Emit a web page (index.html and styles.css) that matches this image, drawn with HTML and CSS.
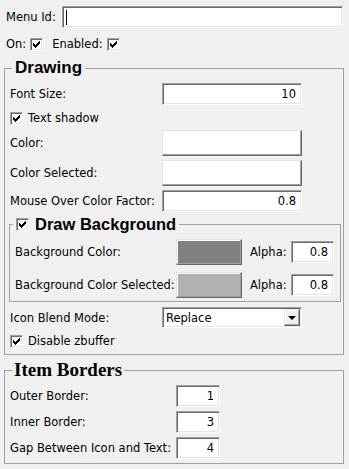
FILE: index.html
```html
<!DOCTYPE html>
<html>
<head>
<meta charset="utf-8">
<link rel="stylesheet" href="styles.css">
</head>
<body>
<div class="panel">
  <div class="row top-row">
    <span class="lbl-menu">Menu Id:</span>
    <div class="field menu-field"><span class="caret"></span></div>
  </div>
  <div class="row top-row on-row">
    <span>On:</span>
    <span class="cb on-cb"><svg width="7" height="7" viewBox="0 0 7 7"><path d="M0 2h1v3h-1zM1 3h1v3h-1zM2 4h1v3h-1zM3 3h1v3h-1zM4 2h1v3h-1zM5 1h1v3h-1zM6 0h1v3h-1z" fill="#000"/></svg></span>
    <span class="en-lbl">Enabled:</span>
    <span class="cb"><svg width="7" height="7" viewBox="0 0 7 7"><path d="M0 2h1v3h-1zM1 3h1v3h-1zM2 4h1v3h-1zM3 3h1v3h-1zM4 2h1v3h-1zM5 1h1v3h-1zM6 0h1v3h-1z" fill="#000"/></svg></span>
  </div>

  <fieldset class="group drawing">
    <legend class="title">Drawing</legend>
    <div class="row r22">
      <span class="lbl-d">Font Size:</span>
      <div class="field num f140">10</div>
    </div>
    <div class="row chk-row">
      <span class="cb"><svg width="7" height="7" viewBox="0 0 7 7"><path d="M0 2h1v3h-1zM1 3h1v3h-1zM2 4h1v3h-1zM3 3h1v3h-1zM4 2h1v3h-1zM5 1h1v3h-1zM6 0h1v3h-1z" fill="#000"/></svg></span>
      <span class="cb-text">Text shadow</span>
    </div>
    <div class="row r26 mt2">
      <span class="lbl-d">Color:</span>
      <div class="cbtn f140"></div>
    </div>
    <div class="row r26 mt4">
      <span class="lbl-d">Color Selected:</span>
      <div class="cbtn f140"></div>
    </div>
    <div class="row r22 mt4">
      <span class="lbl-d">Mouse Over Color Factor:</span>
      <div class="field num f140">0.8</div>
    </div>

    <fieldset class="group drawbg">
      <legend class="bglegend">
        <span class="cb"><svg width="7" height="7" viewBox="0 0 7 7"><path d="M0 2h1v3h-1zM1 3h1v3h-1zM2 4h1v3h-1zM3 3h1v3h-1zM4 2h1v3h-1zM5 1h1v3h-1zM6 0h1v3h-1z" fill="#000"/></svg></span>
        <span>Draw Background</span>
      </legend>
      <div class="row r26">
        <span class="lbl-b">Background Color:</span>
        <div class="sbtn dark"></div>
        <span class="alpha-lbl">Alpha:</span>
        <div class="field num alpha">0.8</div>
      </div>
      <div class="row r26 mt7">
        <span class="lbl-b">Background Color Selected:</span>
        <div class="sbtn light"></div>
        <span class="alpha-lbl">Alpha:</span>
        <div class="field num alpha">0.8</div>
      </div>
    </fieldset>

    <div class="row select-row">
      <span class="lbl-d">Icon Blend Mode:</span>
      <div class="field select f140">
        <span class="sel-text">Replace</span>
        <span class="drop"><span class="arrow"></span></span>
      </div>
    </div>
    <div class="row chk-row mt2">
      <span class="cb"><svg width="7" height="7" viewBox="0 0 7 7"><path d="M0 2h1v3h-1zM1 3h1v3h-1zM2 4h1v3h-1zM3 3h1v3h-1zM4 2h1v3h-1zM5 1h1v3h-1zM6 0h1v3h-1z" fill="#000"/></svg></span>
      <span class="cb-text">Disable zbuffer</span>
    </div>
  </fieldset>

  <fieldset class="group items">
    <legend class="serif-title">Item Borders</legend>
    <div class="row r22">
      <span class="lbl-i">Outer Border:</span>
      <div class="field num small">1</div>
    </div>
    <div class="row r22 mt4">
      <span class="lbl-i">Inner Border:</span>
      <div class="field num small">3</div>
    </div>
    <div class="row r22 mt4">
      <span class="lbl-i">Gap Between Icon and Text:</span>
      <div class="field num small">4</div>
    </div>
  </fieldset>
</div>
</body>
</html>
```
FILE: styles.css
```css
* { box-sizing: border-box; }

html, body {
  margin: 0;
  background: #f0f0f0;
}

body {
  width: 349px;
  height: 469px;
  overflow: hidden;
  font-family: "DejaVu Sans", sans-serif;
  font-size: 11.5px;
  color: #000;
}

.panel {
  padding: 6px 0 0 4px;
}

.row {
  display: flex;
  align-items: center;
  white-space: nowrap;
}

.top-row {
  height: 22px;
  padding-left: 2px;
}

.lbl-menu { width: 56px; }

.field {
  height: 22px;
  background: #fff;
  border: 1px solid;
  border-color: #a0a0a0 #fff #fff #a0a0a0;
  box-shadow: inset 1px 1px 0 #696969, inset -1px -1px 0 #e3e3e3;
  display: flex;
  align-items: center;
  padding: 0 5px;
}

.num { justify-content: flex-end; }

.menu-field {
  width: 281px;
  padding-left: 3px;
}

.caret {
  width: 1px;
  height: 15px;
  background: #000;
}

.on-row { margin-top: 5px; }
.on-cb { margin-left: 4px; }
.en-lbl { margin-left: 9px; margin-right: 4px; }

.cb {
  flex: none;
  width: 13px;
  height: 13px;
  background: #fff;
  border: 1px solid;
  border-color: #a0a0a0 #fff #fff #a0a0a0;
  box-shadow: inset 1px 1px 0 #696969, inset -1px -1px 0 #e3e3e3;
  display: flex;
  align-items: center;
  justify-content: center;
}

.cb svg { display: block; }

.group {
  margin: 0;
  min-width: 0;
  border: 1px solid #a0a0a0;
}

.drawing {
  width: 340px;
  margin-top: 3px;
  padding: 5px 2px 3px 5px;
}

.title {
  font-family: "Liberation Sans", sans-serif;
  font-weight: bold;
  font-size: 17px;
  line-height: 20px;
  padding: 0 3px;
  margin-left: 2px;
}

.r22 { height: 22px; }
.r26 { height: 26px; }
.mt2 { margin-top: 2px; }
.mt4 { margin-top: 4px; }
.mt7 { margin-top: 7px; }

.lbl-d { width: 152px; }
.f140 { width: 140px; }

.chk-row {
  height: 20px;
  margin-top: 3px;
}

.cb-text { margin-left: 5px; }

.cbtn {
  height: 26px;
  background: #fff;
  border: 1px solid;
  border-color: #e3e3e3 #696969 #696969 #e3e3e3;
  box-shadow: inset -1px -1px 0 #a0a0a0, inset 1px 1px 0 #fff;
}

.drawbg {
  margin: 4px 0 0 -1px;
  padding: 7px 0 3px 5px;
}

.bglegend {
  display: flex;
  align-items: center;
  gap: 6px;
  height: 16px;
  margin-left: -2px;
  padding: 0 3px;
  font-family: "Liberation Sans", sans-serif;
  font-weight: bold;
  font-size: 16.5px;
}

.lbl-b { width: 161px; }

.sbtn {
  width: 66px;
  height: 26px;
  border: 1px solid;
  border-color: #e3e3e3 #696969 #696969 #e3e3e3;
  box-shadow: inset -1px -1px 0 #a0a0a0, inset 1px 1px 0 #fff;
}

.sbtn.dark { background: #808080; }
.sbtn.light { background: #b1b1b1; }

.alpha-lbl {
  width: 41px;
  margin-left: 8px;
}

.alpha { width: 43px; }

.select-row {
  height: 21px;
  margin-top: 5px;
}

.select {
  height: 21px;
  padding: 0 1px 0 3px;
}

.sel-text { flex: 1; }

.drop {
  width: 16px;
  height: 17px;
  background: #f0f0f0;
  border: 1px solid;
  border-color: #e3e3e3 #696969 #696969 #e3e3e3;
  box-shadow: inset -1px -1px 0 #a0a0a0, inset 1px 1px 0 #fff;
  display: flex;
  align-items: center;
  justify-content: center;
}

.arrow {
  width: 0;
  height: 0;
  border-left: 4px solid transparent;
  border-right: 4px solid transparent;
  border-top: 4px solid #000;
}

.items {
  width: 340px;
  margin-top: 4px;
  padding: 4px 3px 4px 5px;
}

.serif-title {
  font-family: "Liberation Serif", serif;
  font-weight: bold;
  font-size: 19px;
  line-height: 22px;
  padding: 0 2px;
  margin-left: 2px;
}

.lbl-i { width: 166px; }
.small { width: 44px; }
```
